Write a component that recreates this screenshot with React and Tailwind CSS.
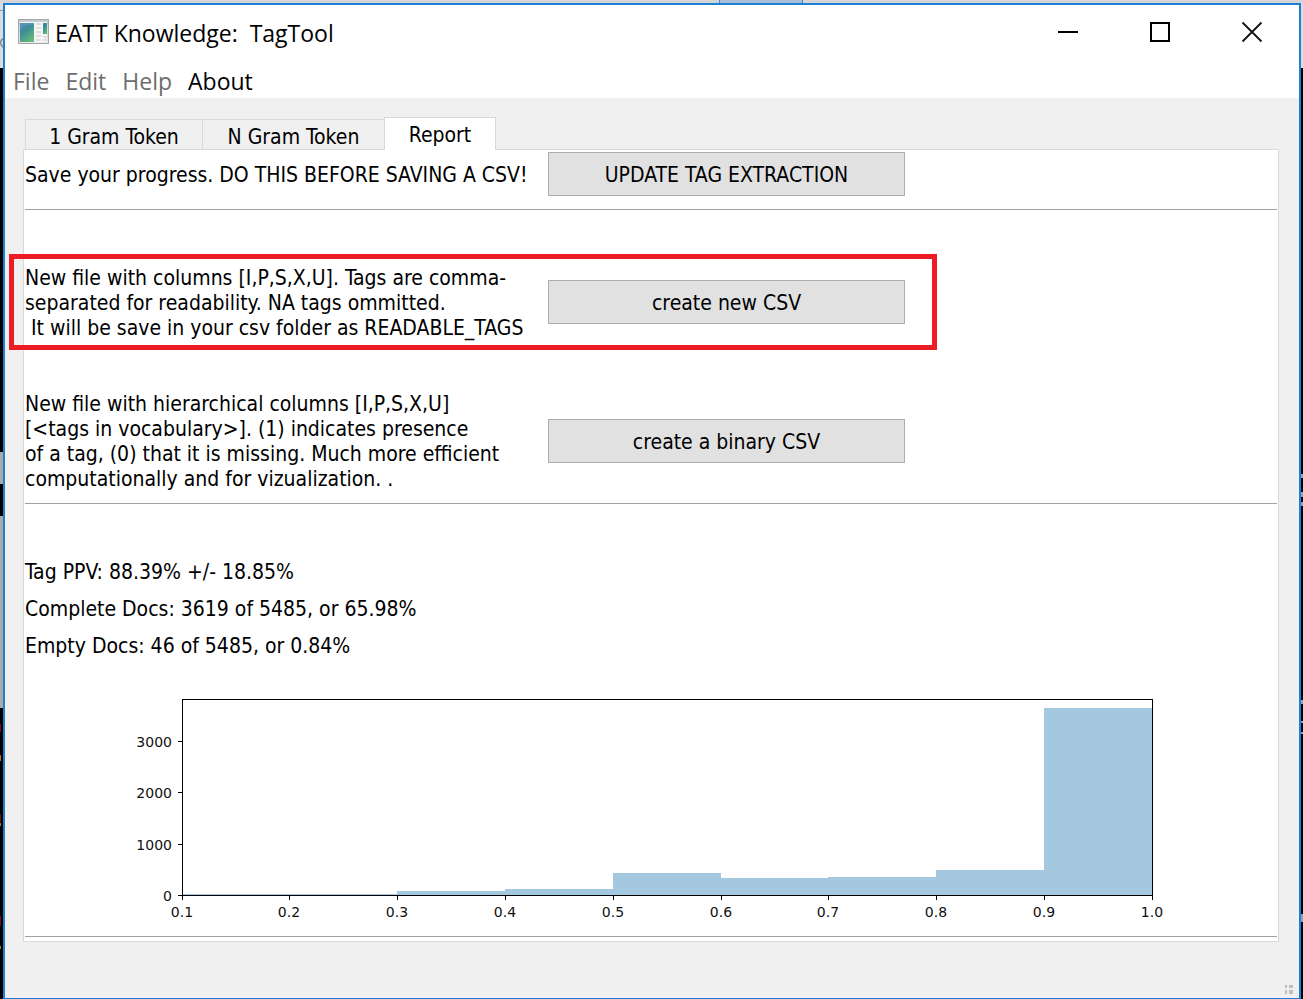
import React from "react";

const bars = [
  { x: 157, end: 372, top: 230 },
  { x: 372, end: 480, top: 227 },
  { x: 480, end: 588, top: 225 },
  { x: 588, end: 696, top: 209 },
  { x: 696, end: 803, top: 214 },
  { x: 803, end: 911, top: 213 },
  { x: 911, end: 1019, top: 206 },
  { x: 1019, end: 1127, top: 44 },
];

const xTicks = [
  [157, "0.1"],
  [264, "0.2"],
  [372, "0.3"],
  [480, "0.4"],
  [588, "0.5"],
  [696, "0.6"],
  [803, "0.7"],
  [911, "0.8"],
  [1019, "0.9"],
  [1127, "1.0"],
];

const yTicks = [
  [231, "0"],
  [180, "1000"],
  [128, "2000"],
  [77, "3000"],
];

function AppIcon() {
  return (
    <svg width="32" height="26" viewBox="0 0 32 26" aria-hidden="true">
      <defs>
        <linearGradient id="pane" x1="0" y1="0" x2="0.6" y2="1">
          <stop offset="0" stopColor="#3d7fa6" />
          <stop offset="0.5" stopColor="#3f8f95" />
          <stop offset="1" stopColor="#62b878" />
        </linearGradient>
        <linearGradient id="frame" x1="0" y1="0" x2="0" y2="1">
          <stop offset="0" stopColor="#c3c9d0" />
          <stop offset="1" stopColor="#e9e9ea" />
        </linearGradient>
      </defs>
      <rect x="0.5" y="0.5" width="30" height="24" fill="url(#frame)" stroke="#a3a7ac" />
      <rect x="2" y="3" width="27" height="20" fill="#f6f6f6" />
      <rect x="2" y="4" width="14" height="19" fill="url(#pane)" />
      <path d="M2 11 Q8 5 16 6 V4 H2Z" fill="#6aa3c4" opacity="0.5" />
      <path d="M18 5h5M18 9h5M18 13h5M18 17h5M18 21h5M25 18h4M25 21h4" stroke="#d6d6d6" strokeWidth="1.6" />
      <rect x="25" y="4" width="4" height="11" fill="url(#pane)" />
    </svg>
  );
}

function Tab({ active, className, children }) {
  return (
    <button
      type="button"
      role="tab"
      aria-selected={Boolean(active)}
      className={
        "border-t border-[#d9d9d9] text-center leading-[28px] " +
        (active ? "z-10 -mb-px h-[33px] border-x bg-white pt-px " : "h-[30px] border-l bg-[#f0f0f0] pt-[3px] ") +
        className
      }
    >
      {children}
    </button>
  );
}

function ActionRow({ label, action, className, children }) {
  const id = action.replace(/ /g, "-");
  return (
    <div className={"relative grid grid-cols-[523fr_357fr_372fr] items-center " + className}>
      <p id={id} className="whitespace-pre pt-[2px] leading-[25px]">
        {label}
      </p>
      <button
        type="button"
        aria-describedby={id}
        className="h-11 border border-[#adadad] bg-[#e1e1e1] pt-1 text-center"
      >
        {action}
      </button>
      {children}
    </div>
  );
}

function Histogram() {
  return (
    <svg
      viewBox="0 1 1252 271"
      className="block w-full font-['DejaVu_Sans',sans-serif] text-[14px]"
      role="img"
      aria-label="Histogram"
    >
      <g fill="#a4c8e0" shapeRendering="crispEdges">
        {bars.map((b) => (
          <rect key={b.x} x={b.x} y={b.top} width={b.end - b.x} height={231 - b.top} />
        ))}
      </g>
      <g fill="none" stroke="#000" shapeRendering="crispEdges">
        <rect x="157.5" y="35.5" width="970" height="196" />
        {xTicks.map(([x]) => (
          <path key={x} d={`M${x + 0.5} 232v4`} />
        ))}
        {yTicks.map(([y]) => (
          <path key={y} d={`M153 ${y + 0.5}h4`} />
        ))}
      </g>
      <g fill="#111">
        {xTicks.map(([x, t]) => (
          <text key={t} x={x} y="253" textAnchor="middle">
            {t}
          </text>
        ))}
        {yTicks.map(([y, t]) => (
          <text key={t} x="147" y={y + 6} textAnchor="end">
            {t}
          </text>
        ))}
      </g>
    </svg>
  );
}

export default function App() {
  return (
    <div className="flex min-h-screen flex-col bg-black text-black">
      <div className="flex h-[3px] bg-[#d5d5d5]">
        <div className="w-[55.2%]" />
        <div className="w-[84px] border-x border-[#4a87c7] bg-[#a9bfd8]" />
      </div>
      <div className="flex grow">
        <div className="flex w-[3px] flex-col overflow-hidden">
          <div className="h-[65px] bg-[#dcdcdc]">
            <svg width="3" height="65" viewBox="0 0 3 65" aria-hidden="true">
              <path d="M0 7.5h3" stroke="#999" />
              <path d="M4 35Q-3 39 4 45" stroke="#888" strokeWidth="1.5" fill="none" />
            </svg>
          </div>
          <div className="h-96" />
          <div className="h-8 bg-[#a9a9a9]" />
          <div className="h-8" />
          <div className="h-48 bg-[#a9a9a9]" />
          <svg width="3" height="250" viewBox="0 0 3 250" aria-hidden="true">
            <path d="M0 16v8M0 106v8M0 208v10" stroke="#6b1212" strokeWidth="2" />
            <path d="M0 47v6M0 115v3M0 238v3" stroke="#b27a3c" strokeWidth="2" />
          </svg>
        </div>
        <div className="flex min-w-0 grow flex-col border-2 border-b border-[#1a80d6] bg-[#f0f0f0]">
          <header className="bg-white font-['Open_Sans',sans-serif] text-[23px]">
            <div className="flex h-[55px] justify-between">
              <div className="flex items-start gap-[5px] pt-[14px] pl-[13px]">
                <AppIcon />
                <h1 className="-mt-px whitespace-pre leading-[30px]">
                  {"EATT Knowledge:  TagTool"}
                </h1>
              </div>
              <div className="flex">
                <button type="button" aria-label="Minimize" className="flex w-[92px] justify-center pt-4">
                  <svg width="22" height="22" viewBox="0 0 22 22" aria-hidden="true">
                    <path d="M0 11h20" stroke="#000" strokeWidth="2" />
                  </svg>
                </button>
                <button type="button" aria-label="Maximize" className="flex w-[92px] justify-center pt-4">
                  <svg width="24" height="22" viewBox="0 0 24 22" aria-hidden="true">
                    <rect x="2" y="2" width="18" height="18" stroke="#000" strokeWidth="2" fill="none" />
                  </svg>
                </button>
                <button type="button" aria-label="Close" className="flex w-[92px] justify-center pt-4">
                  <svg width="24" height="22" viewBox="0 0 24 22" aria-hidden="true">
                    <path d="M1.5 1.5l19 19M20.500 1.5l-19 19" stroke="#111" strokeWidth="1.8" />
                  </svg>
                </button>
              </div>
            </div>
            <nav className="flex h-[38px] gap-4 pt-1 pl-[8px] leading-[34px] text-[#6d6d6d]">
              <button type="button" disabled>File</button>
              <button type="button" disabled>Edit</button>
              <button type="button" disabled>Help</button>
              <button type="button" className="text-black">About</button>
            </nav>
          </header>
          <main className="flex grow flex-col px-[18px] pt-[19px] pr-5 font-['DejaVu_Sans_Condensed','DejaVu_Sans',sans-serif] text-[21px]">
            <div role="tablist" className="flex items-end pl-[2px]">
              <Tab className="w-[177px]">1 Gram Token</Tab>
              <Tab className="w-[182px]">N Gram Token</Tab>
              <Tab active className="w-[112px]">Report</Tab>
            </div>
            <section className="border border-[#d9d9d9] bg-white px-px pt-[2px] pb-1">
              <ActionRow
                label="Save your progress. DO THIS BEFORE SAVING A CSV!"
                action="UPDATE TAG EXTRACTION"
                className=""
              />
              <hr className="mt-[13px] border-[#a0a0a0]" />
              <ActionRow
                label={
                  "New file with columns [I,P,S,X,U]. Tags are comma-\nseparated for readability. NA tags ommitted.\n It will be save in your csv folder as READABLE_TAGS"
                }
                action="create new CSV"
                className="mt-11 h-24"
              >
                <div className="pointer-events-none absolute inset-y-0 -right-8 -left-4 col-start-1 col-end-3 border-[5px] border-[#ed1c24]" />
              </ActionRow>
              <ActionRow
                label={
                  "New file with hierarchical columns [I,P,S,X,U]\n[<tags in vocabulary>]. (1) indicates presence\nof a tag, (0) that it is missing. Much more efficient\ncomputationally and for vizualization. ."
                }
                action="create a binary CSV"
                className="mt-10"
              />
              <hr className="mt-[11px] border-[#a0a0a0]" />
              <div className="mt-[50px] leading-[37px]">
                <p>Tag PPV: 88.39% +/- 18.85%</p>
                <p>Complete Docs: 3619 of 5485, or 65.98%</p>
                <p>Empty Docs: 46 of 5485, or 0.84%</p>
              </div>
              <Histogram />
              <hr className="border-[#a0a0a0]" />
            </section>
          </main>
          <footer className="flex justify-end pr-[5px] pb-1">
            <svg width="9" height="9" viewBox="0 0 9 9" fill="#bfbfbf" aria-hidden="true">
              <path d="M0 0h2v3h-2zM4 0h4v3h-4zM0 5h2v4h-2zM4 5h4v4h-4z" />
            </svg>
          </footer>
        </div>
        <div className="w-[2px] overflow-hidden">
          <div className="h-[65px] bg-[#dcdcdc]" />
          <svg width="2" height="900" viewBox="0 0 2 900" aria-hidden="true">
            <path d="M1 406v4M1 424v5M1 434v4M1 632v4M1 653v2M1 664v2M1 846v8" stroke="#8fa3b5" strokeWidth="2" />
          </svg>
        </div>
      </div>
    </div>
  );
}
